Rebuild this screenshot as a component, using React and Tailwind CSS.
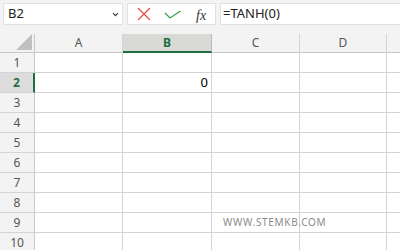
import React from "react";

const cols = [
  { key: "A", w: "w-[88px]" },
  { key: "B", w: "w-[89px]" },
  { key: "C", w: "w-[88px]" },
  { key: "D", w: "w-[87px]" },
];

function Row({ n }) {
  const sel = n === 2;
  return (
    <div className="flex h-[20px]">
      <div
        className={
          "w-[35px] h-full shrink-0 border-b border-[#d4d4d4] flex items-center justify-center text-[12px] " +
          (sel
            ? "bg-[#dcdcdc] text-[#1e6e42] font-bold border-r-2 border-r-[#1e6e42]"
            : "bg-[#f3f3f3] text-[#555] border-r border-r-[#c8c8c8]")
        }
      >
        {n}
      </div>
      {cols.map((c) => (
        <div
          key={c.key}
          className={c.w + " h-full shrink-0 bg-white border-r border-b border-[#d4d4d4] flex items-center justify-end pr-[3px] text-[13px] text-black"}
        >
          {sel && c.key === "B" ? "0" : ""}
        </div>
      ))}
      <div className="flex-1 h-full bg-white border-b border-[#d4d4d4]" />
    </div>
  );
}

export default function App() {
  return (
    <div
      className="w-[400px] h-[250px] overflow-hidden bg-[#f3f3f3] relative"
      style={{ fontFamily: '"Noto Sans", "Open Sans", sans-serif' }}
    >
      {/* Formula bar */}
      <div className="h-[34px] flex pt-[3px] pl-[3px]">
        <div className="w-[120px] h-[22px] bg-white border border-[#e1e1e1] flex items-center pl-[4px] pr-[3px] text-[13px] text-[#222]">
          <span className="flex-1">B2</span>
          <svg width="7" height="5" viewBox="0 0 7 5" className="mt-[1px]">
            <path d="M1 1.2 L3.5 3.7 L6 1.2" fill="none" stroke="#333" strokeWidth="1.1" />
          </svg>
        </div>
        <div className="ml-[4px] w-[89px] h-[22px] bg-white border border-[#e1e1e1] relative">
          <svg width="14" height="14" viewBox="0 0 14 14" className="absolute left-[9px] top-[3px]">
            <path d="M1 1 L13 13 M13 1 L1 13" stroke="#e8474a" strokeWidth="1.2" fill="none" />
          </svg>
          <svg width="18" height="10" viewBox="0 0 18 10" className="absolute left-[36px] top-[6px]">
            <path d="M1 3 L6 8 L16.5 1" stroke="#3a9e4a" strokeWidth="1.3" fill="none" />
          </svg>
          <span
            className="absolute left-[68px] top-[1px] text-[14px] italic text-[#333]"
            style={{ fontFamily: '"Liberation Serif", serif' }}
          >
            fx
          </span>
        </div>
        <div className="ml-[4px] flex-1 h-[22px] bg-white border border-[#e1e1e1] border-r-0 flex items-center pl-[2px] text-[13px] text-[#222]">
          =TANH(0)
        </div>
      </div>

      {/* Column header */}
      <div className="flex h-[19px]">
        <div className="w-[35px] h-full shrink-0 border-r border-b border-[#c8c8c8] relative bg-[#f3f3f3]">
          <svg width="16" height="16" viewBox="0 0 16 16" className="absolute right-[2px] bottom-[2px]">
            <path d="M16 0 L16 16 L0 16 Z" fill="#c0c0c0" />
          </svg>
        </div>
        {cols.map((c) =>
          c.key === "B" ? (
            <div
              key={c.key}
              className={c.w + " h-full shrink-0 bg-[#d9d9d6] border-r border-[#b8b8b8] border-b-2 border-b-[#1e6e42] flex items-center justify-center text-[12px] font-bold text-[#1e6e42]"}
            >
              B
            </div>
          ) : (
            <div
              key={c.key}
              className={c.w + " h-full shrink-0 border-r border-b border-[#d4d4d4] border-b-[#c8c8c8] flex items-center justify-center text-[12px] text-[#555]"}
            >
              {c.key}
            </div>
          )
        )}
        <div className="flex-1 h-full border-b border-[#c8c8c8]" />
      </div>

      {[1, 2, 3, 4, 5, 6, 7, 8, 9, 10].map((n) => (
        <Row key={n} n={n} />
      ))}

      <div className="absolute left-[223px] top-[215px] text-[10px] tracking-[0.7px] text-[#8a8a8a]">
        WWW.STEMKB.COM
      </div>
    </div>
  );
}
